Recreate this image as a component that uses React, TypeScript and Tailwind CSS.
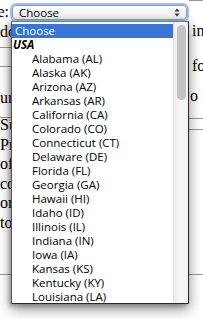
const states = [
  'Alabama (AL)',
  'Alaska (AK)',
  'Arizona (AZ)',
  'Arkansas (AR)',
  'California (CA)',
  'Colorado (CO)',
  'Connecticut (CT)',
  'Delaware (DE)',
  'Florida (FL)',
  'Georgia (GA)',
  'Hawaii (HI)',
  'Idaho (ID)',
  'Illinois (IL)',
  'Indiana (IN)',
  'Iowa (IA)',
  'Kansas (KS)',
  'Kentucky (KY)',
  'Louisiana (LA)',
];

const paragraph = ['Submit', 'Pro', 'of', 'con', 'or', 'to'];

export default function App() {
  return (
    <div className="relative w-[203px] h-[319px] overflow-hidden bg-white text-black font-['Liberation_Serif',serif] text-[16px]">
      {/* page behind the menu */}
      <div className="flex h-full">
        <div className="w-[11px] shrink-0 overflow-hidden whitespace-nowrap">
          <div className="h-[21px] pt-[1px] leading-[21px] flex justify-end pr-[2px]">e:</div>
          <div className="h-[27px] pt-[1px] leading-[20px] border-b border-[#9a9a9a]">do</div>
          <div className="h-[19px] border-b border-[#9a9a9a]" />
          <div className="h-[51px] pt-[21px] leading-[20px] border-b border-[#9a9a9a]">ur</div>
          <div className="-mt-[3px] leading-[19.5px]">
            {paragraph.map((w) => (
              <div key={w}>{w}</div>
            ))}
          </div>
          <div className="h-[43px] border-b border-[#9a9a9a]" />
        </div>

        <div className="flex-1 min-w-0">
          <div className="mt-[5px] ml-[1px] mr-[2px] h-[15px] rounded-[4px] border border-[#8f9aa8] bg-gradient-to-b from-white to-[#ececec] shadow-[0_0_0_2px_#9cc0ef] flex items-center justify-between pl-[6px] pr-[6px] font-['Open_Sans',sans-serif] text-[11.5px] leading-[13px]">
            <span>Choose</span>
            <svg width="6" height="9" viewBox="0 0 6 9" className="shrink-0">
              <path d="M3 0.5 L5.5 3.5 L0.5 3.5 Z" fill="#333" />
              <path d="M3 8.5 L5.5 5.5 L0.5 5.5 Z" fill="#333" />
            </svg>
          </div>
        </div>

        <div className="w-[14px] shrink-0 overflow-hidden whitespace-nowrap">
          <div className="h-[21px] border-t border-[#9a9a9a]" />
          <div className="h-[20px] pl-[3px] leading-[20px]">in</div>
          <div className="h-[35px] pt-[15px] pl-[3px] leading-[20px]">fo</div>
          <div className="h-[30px] pt-[10px] pl-[1px] leading-[20px]">o</div>
          <div className="h-[13px] border-b border-[#9a9a9a]" />
          <div className="h-[11px] border-b border-[#9a9a9a]" />
          <div className="h-[145px] border-b border-[#9a9a9a]" />
        </div>
      </div>

      {/* open select menu */}
      <div className="absolute left-[11px] top-[21px] w-[178px] h-[283px] flex bg-white border border-[#2a2a2a] border-t-[#777] border-l-[#555] shadow-[0_5px_12px_rgba(0,0,0,0.45),-2px_2px_4px_rgba(0,0,0,0.25)] overflow-hidden font-['Open_Sans',sans-serif] text-[11.5px]">
        <div className="flex-1 min-w-0 pt-[2px] whitespace-nowrap">
          <div className="h-[14px] leading-[14px] pl-[3px] bg-[#3875d7] text-white">Choose</div>
          <div className="h-[14px] leading-[14px] pl-[1px] font-bold italic">USA</div>
          {states.map((s) => (
            <div key={s} className="h-[14px] leading-[14px] pl-[20px]">
              {s}
            </div>
          ))}
        </div>
        <div className="w-[15px] shrink-0 border-l border-[#e2e2e2] bg-gradient-to-r from-[#ededed] via-[#f8f8f8] to-[#f1f1f1]">
          <div className="mt-[3px] ml-[3px] w-[9px] h-[75px] rounded-full bg-[#c3c3c3]" />
        </div>
      </div>
    </div>
  );
}
